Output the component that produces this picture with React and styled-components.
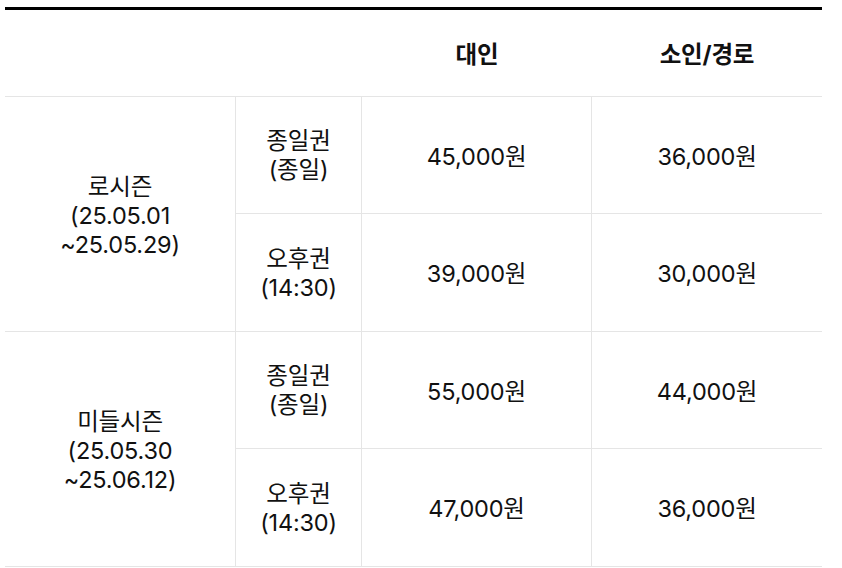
import React from "react";
import styled, { createGlobalStyle } from "styled-components";

const GlobalStyle = createGlobalStyle`
  html, body { margin: 0; padding: 0; background: #fff; }
  body {
    font-family: Inter, "Noto Sans CJK KR", "Noto Sans", sans-serif;
    color: #111;
  }
`;

const Page = styled.div`
  padding: 7px 0 0 5px;
`;

const Grid = styled.div`
  display: grid;
  width: 817px;
  grid-template-columns: 231px 126px 230px 230px;
  grid-template-rows: 87px 117px 118px 117px 118px;
  border-top: 3px solid #000;
  box-sizing: content-box;
`;

const Cell = styled.div`
  box-sizing: border-box;
  display: flex;
  align-items: center;
  justify-content: center;
  text-align: center;
  border-bottom: 1px solid #e5e5e5;
  border-right: ${(p) => (p.$divider ? "1px solid #e5e5e5" : "none")};
  font-size: 23.5px;
  line-height: 29px;
  letter-spacing: -0.2px;
`;

const HeadCell = styled(Cell)`
  font-weight: 700;
  padding-top: 2px;
`;

const SeasonCell = styled(Cell)`
  grid-row: span 2;
  padding-top: 2px;
`;

const TicketCell = styled(Cell)``;

const PriceCell = styled(Cell)`
  padding-top: 2px;
`;

const seasons = [
  {
    name: "로시즌",
    range: ["(25.05.01", "~25.05.29)"],
    rows: [
      { ticket: "종일권", note: "(종일)", adult: "45,000원", child: "36,000원" },
      { ticket: "오후권", note: "(14:30)", adult: "39,000원", child: "30,000원" },
    ],
  },
  {
    name: "미들시즌",
    range: ["(25.05.30", "~25.06.12)"],
    rows: [
      { ticket: "종일권", note: "(종일)", adult: "55,000원", child: "44,000원" },
      { ticket: "오후권", note: "(14:30)", adult: "47,000원", child: "36,000원" },
    ],
  },
];

export default function App() {
  return (
    <>
      <GlobalStyle />
      <Page>
        <Grid>
          <HeadCell />
          <HeadCell />
          <HeadCell>대인</HeadCell>
          <HeadCell>소인/경로</HeadCell>
          {seasons.map((s) => (
            <React.Fragment key={s.name}>
              <SeasonCell $divider>
                <div>
                  {s.name}
                  <br />
                  {s.range[0]}
                  <br />
                  {s.range[1]}
                </div>
              </SeasonCell>
              {s.rows.map((r, i) => (
                <React.Fragment key={i}>
                  <TicketCell $divider>
                    <div>
                      {r.ticket}
                      <br />
                      {r.note}
                    </div>
                  </TicketCell>
                  <PriceCell $divider>{r.adult}</PriceCell>
                  <PriceCell>{r.child}</PriceCell>
                </React.Fragment>
              ))}
            </React.Fragment>
          ))}
        </Grid>
      </Page>
    </>
  );
}
